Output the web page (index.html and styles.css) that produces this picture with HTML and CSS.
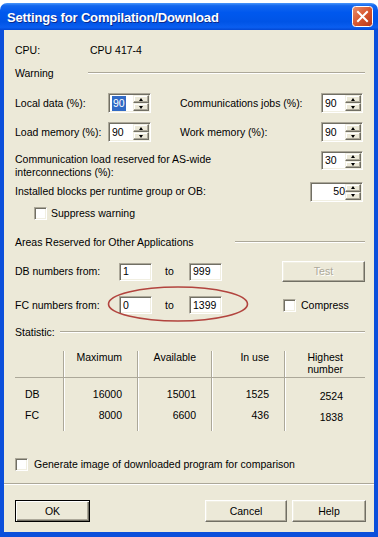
FILE: index.html
```html
<!DOCTYPE html>
<html>
<head>
<meta charset="utf-8">
<link rel="stylesheet" href="styles.css">
</head>
<body>
<div class="window">
  <div class="titlebar">
    <span class="title">Settings for Compilation/Download</span>
    <span class="close">
      <svg width="21" height="21" viewBox="0 0 21 21">
        <defs>
          <linearGradient id="cg" x1="0" y1="0" x2="1" y2="1">
            <stop offset="0" stop-color="#E9906E"/>
            <stop offset="0.5" stop-color="#D8572F"/>
            <stop offset="1" stop-color="#B8361A"/>
          </linearGradient>
        </defs>
        <rect x="0.5" y="0.5" width="20" height="20" rx="3" fill="url(#cg)" stroke="#fff"/>
        <path d="M6 6 L15 15 M15 6 L6 15" stroke="#fff" stroke-width="2" stroke-linecap="square"/>
      </svg>
    </span>
  </div>
  <div class="client">
    <div class="row r-cpu"><span class="lbl-cpu">CPU:</span><span>CPU 417-4</span></div>
    <div class="row r-warn"><span class="gl gl-warn">Warning</span><span class="rule"></span></div>

    <div class="row r-local">
      <span class="lbl-a">Local data (%):</span>
      <div class="spin w43"><span class="val"><span class="sel">90</span></span><span class="arrows"><span class="ab"><i class="up"></i></span><span class="ab"><i class="dn"></i></span></span></div>
      <span class="lbl-b">Communications jobs (%):</span>
      <div class="spin w42 mr2"><span class="val">90</span><span class="arrows"><span class="ab"><i class="up"></i></span><span class="ab"><i class="dn"></i></span></span></div>
    </div>

    <div class="row r-load">
      <span class="lbl-a">Load memory (%):</span>
      <div class="spin w43"><span class="val">90</span><span class="arrows"><span class="ab"><i class="up"></i></span><span class="ab"><i class="dn"></i></span></span></div>
      <span class="lbl-b">Work memory (%):</span>
      <div class="spin w42 mr2"><span class="val">90</span><span class="arrows"><span class="ab"><i class="up"></i></span><span class="ab"><i class="dn"></i></span></span></div>
    </div>

    <div class="row r-comm">
      <span class="lbl-b two">Communication load reserved for AS-wide<br>interconnections (%):</span>
      <div class="spin w42 mr2"><span class="val">30</span><span class="arrows"><span class="ab"><i class="up"></i></span><span class="ab"><i class="dn"></i></span></span></div>
    </div>

    <div class="row r-inst">
      <span class="lbl-b">Installed blocks per runtime group or OB:</span>
      <div class="spin w53 mr2"><span class="val right">50</span><span class="arrows"><span class="ab"><i class="up"></i></span><span class="ab"><i class="dn"></i></span></span></div>
    </div>

    <div class="row r-supp"><span class="chk"></span><span>Suppress warning</span></div>

    <div class="row r-areas"><span class="gl gl-areas">Areas Reserved for Other Applications</span><span class="rule"></span></div>

    <div class="row r-db">
      <span class="lbl-n">DB numbers from:</span>
      <span class="field">1</span>
      <span class="to">to</span>
      <span class="field">999</span>
      <span class="btn test">Test</span>
    </div>

    <div class="row r-fc">
      <span class="lbl-n">FC numbers from:</span>
      <span class="field">0</span>
      <span class="to">to</span>
      <span class="field">1399</span>
      <span class="compress"><span class="chk"></span><span>Compress</span></span>
    </div>

    <div class="row r-stat"><span class="gl gl-stat">Statistic:</span><span class="rule"></span></div>

    <div class="stats">
      <div class="c h first"></div>
      <div class="c h">Maximum</div>
      <div class="c h">Available</div>
      <div class="c h">In use</div>
      <div class="c h last">Highest<br>number</div>

      <div class="c r1 first">DB</div>
      <div class="c r1">16000</div>
      <div class="c r1">15001</div>
      <div class="c r1">1525</div>
      <div class="c r1 last">2524</div>

      <div class="c r2 first">FC</div>
      <div class="c r2">8000</div>
      <div class="c r2">6600</div>
      <div class="c r2">436</div>
      <div class="c r2 last">1838</div>
    </div>

    <div class="row r-gen"><span class="chk"></span><span>Generate image of downloaded program for comparison</span></div>

    <div class="sep"></div>

    <div class="row r-btns">
      <span class="btn default ok">OK</span>
      <span class="btn cancel">Cancel</span>
      <span class="btn help">Help</span>
    </div>

    <svg class="ellipse" width="142" height="38" viewBox="0 0 142 38">
      <ellipse cx="71" cy="19" rx="69.5" ry="17" fill="none" stroke="#B2443E" stroke-width="1.6"/>
    </svg>
  </div>
</div>
</body>
</html>
```

FILE: styles.css
```css
* { box-sizing: border-box; }
html, body { margin: 0; padding: 0; background: #ffffff; }
body {
  font-family: "Liberation Sans", Arial, sans-serif;
  font-size: 10.5px;
  line-height: 13px;
  color: #000;
}

.window { width: 378px; margin-top: 3px; }

.titlebar {
  height: 27px;
  display: flex;
  align-items: center;
  padding: 0 5px 0 7px;
  border-radius: 7px 7px 0 0;
  background: linear-gradient(to bottom, #4A97FA 0%, #1467EE 10%, #0058EE 35%, #0054E6 70%, #0A5EF0 90%, #0348D4 100%);
}
.title {
  flex: 1;
  color: #fff;
  font-weight: bold;
  font-size: 13px;
  letter-spacing: -0.15px;
  text-shadow: 1px 1px #0C2B8C;
  padding-top: 1px;
}
.close { width: 21px; height: 21px; display: block; }
.close svg { display: block; }

.client {
  position: relative;
  background: #ECE9D8;
  border: 4px solid #0B4FDB;
  border-top: 0;
  border-bottom-width: 6px;
  padding: 10px 9px 10px 11px;
  display: flex;
  flex-direction: column;
}

.row { display: flex; align-items: center; white-space: nowrap; }

.r-cpu { height: 20px; }
.lbl-cpu { width: 75px; }

.r-warn { height: 20px; margin-top: 3px; }
.gl-warn { width: 73px; }
.rule {
  flex: 1;
  height: 2px;
  border-top: 1px solid #ACA899;
  border-bottom: 1px solid #fff;
}

.r-local { height: 20px; margin-top: 10px; }
.r-load { height: 20px; margin-top: 9px; }
.r-comm { height: 28px; margin-top: 9px; align-items: flex-start; }
.r-inst { height: 19px; margin-top: 3px; }
.lbl-a { width: 93px; }
.lbl-b { flex: 1; }
.w43 + .lbl-b { margin-left: 29px; }
.two { padding-top: 2px; }

.spin {
  display: flex;
  height: 20px;
  background: #fff;
  border: 1px solid;
  border-color: #ACA899 #fff #fff #ACA899;
  box-shadow: inset 1px 1px #716F64, inset -1px -1px #F1EFE2;
  padding: 1px 1px 1px 1px;
}
.r-comm .spin { height: 19px; }
.w43 { width: 43px; }
.w42 { width: 42px; }
.w53 { width: 53px; }
.mr2 { margin-right: 2px; }
.val {
  flex: 1;
  display: flex;
  align-items: center;
  padding-left: 2px;
}
.val.right { justify-content: flex-end; padding-right: 0; }
.sel { background: #316AC5; color: #fff; padding: 1px 1px; line-height: 13px; }
.arrows { width: 16px; display: flex; flex-direction: column; }
.ab {
  flex: 1;
  display: flex;
  align-items: center;
  justify-content: center;
  background: #ECE9D8;
  border: 1px solid;
  border-color: #F1EFE2 #716F64 #716F64 #F1EFE2;
  box-shadow: inset -1px -1px #ACA899, inset 1px 1px #fff;
}
.ab i { display: block; width: 1px; height: 0; border-left: 2px solid transparent; border-right: 2px solid transparent; }
.ab i.up { border-bottom: 3px solid #000; }
.ab i.dn { border-top: 3px solid #000; }

.chk {
  width: 13px;
  height: 13px;
  background: #fff;
  border: 1px solid;
  border-color: #ACA899 #fff #fff #ACA899;
  box-shadow: inset 1px 1px #716F64, inset -1px -1px #F1EFE2;
  flex: none;
}

.r-supp { height: 14px; margin-top: 5px; padding-left: 19px; gap: 4px; }

.r-areas { height: 20px; margin-top: 12px; }
.gl-areas { width: 220px; }

.r-db { height: 21px; margin-top: 9px; }
.r-fc { height: 18px; margin-top: 14px; }
.lbl-n { width: 104px; }
.field {
  width: 33px;
  height: 18px;
  background: #fff;
  border: 1px solid;
  border-color: #ACA899 #fff #fff #ACA899;
  box-shadow: inset 1px 1px #716F64, inset -1px -1px #F1EFE2;
  padding-left: 3px;
  display: flex;
  align-items: center;
}
.to { width: 37px; padding-left: 13px; }

.btn {
  display: flex;
  align-items: center;
  justify-content: center;
  height: 22px;
  background: #ECE9D8;
  border: 1px solid;
  border-color: #fff #716F64 #716F64 #fff;
  box-shadow: inset -1px -1px #ACA899, inset 1px 1px #F1EFE2;
}
.test {
  margin-left: auto;
  width: 83px;
  height: 21px;
  color: #ACA899;
  text-shadow: 1px 1px #fff;
}
.compress { margin-left: auto; width: 82px; display: flex; align-items: center; gap: 5px; }

.r-stat { height: 20px; margin-top: 8px; }
.gl-stat { width: 45px; }

.stats {
  margin-top: 9px;
  display: grid;
  grid-template-columns: 48px 74px 74px 73px 81px;
  grid-template-rows: 27px 27px 26px;
}
.c {
  text-align: right;
  padding-right: 15px;
  border-left: 1px solid #ACA899;
  box-shadow: inset 1px 0 #fff;
}
.c.first { text-align: left; padding-left: 10px; border-left: 0; box-shadow: none; }
.c.last { padding-right: 22px; }
.c.h {
  border-bottom: 1px solid #ACA899;
  padding-top: 0;
  line-height: 12px;
}
.c.r1 { padding-top: 10px; }
.c.r2 { padding-top: 4px; }
.c.r1.last, .c.r2.last { padding-top: 12px; }
.c.r2.last { padding-top: 6px; }

.r-gen { height: 14px; margin-top: 26px; gap: 6px; }

.sep {
  margin: 12px -9px 0 -11px;
  height: 2px;
  border-top: 1px solid #ACA899;
  border-bottom: 1px solid #fff;
}

.r-btns { height: 22px; margin-top: 15px; }
.ok { width: 75px; }
.default {
  border: 1px solid #000;
  box-shadow: inset 1px 1px #fff, inset -1px -1px #716F64, inset -2px -2px #ACA899;
}
.cancel { width: 82px; margin-left: auto; }
.help { width: 74px; margin-left: 5px; margin-right: -1px; }

.ellipse { position: absolute; left: 103px; top: 255px; }
```
